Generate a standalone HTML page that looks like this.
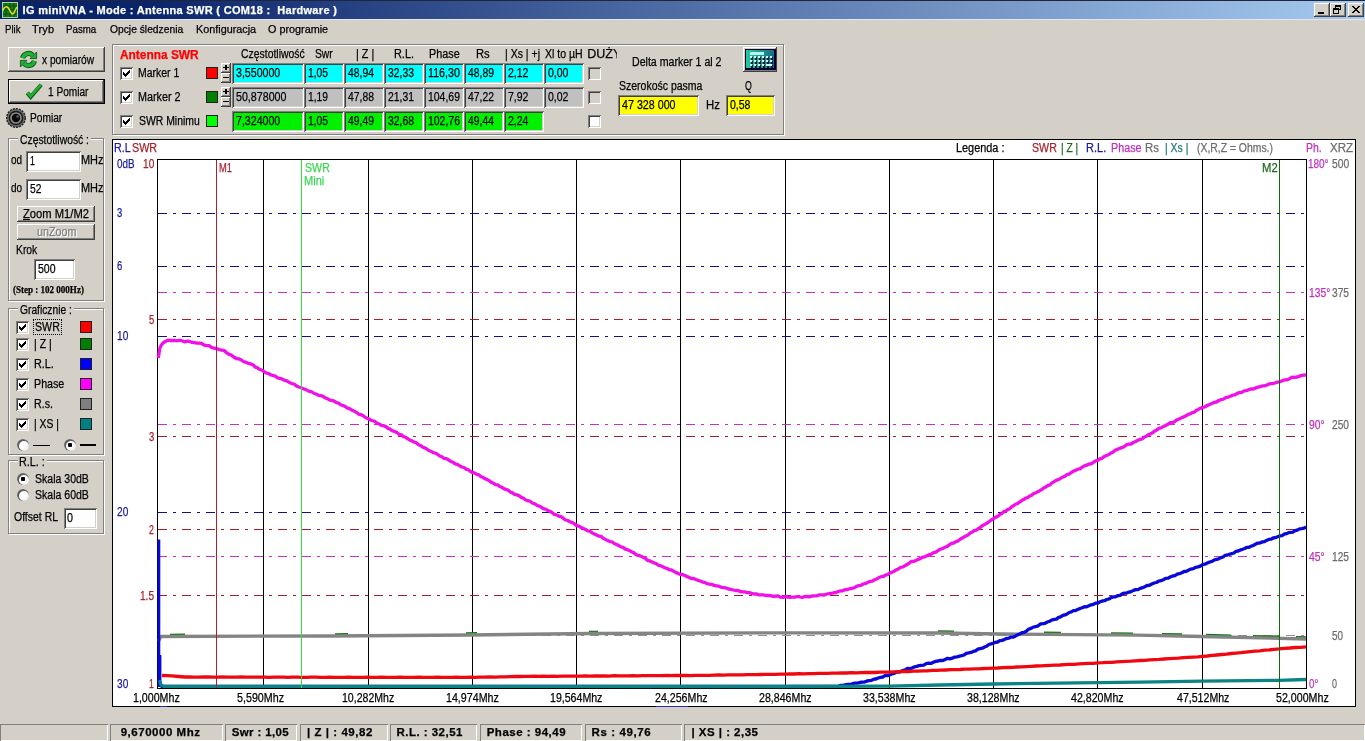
<!DOCTYPE html>
<html lang="pl"><head><meta charset="utf-8"><title>IG miniVNA - Mode : Antenna SWR</title>
<style>
html,body{margin:0;padding:0;}
html{background:#d4d0c8;}
#root{position:absolute;left:0;top:0;width:1365px;height:741px;will-change:transform;}
body{width:1365px;height:741px;overflow:hidden;position:relative;
 font-family:"Liberation Sans",sans-serif;font-size:12px;color:#000;}
.abs{position:absolute;box-sizing:border-box;}
.t{position:absolute;white-space:pre;display:block;transform-origin:0 50%;-webkit-text-stroke:0.25px currentColor;}
.sunk{box-shadow:inset 1px 1px #808080,inset -1px -1px #fff,inset 2px 2px #404040,inset -2px -2px #d4d0c8;}
.sunk1{box-shadow:inset 1px 1px #808080,inset -1px -1px #fff;}
.raise{box-shadow:inset -1px -1px #404040,inset 1px 1px #fff,inset -2px -2px #808080,inset 2px 2px #d4d0c8;background:#d4d0c8;}
.ck{position:absolute;left:3px;top:3px;}
.radio{width:12px;height:12px;border-radius:50%;background:#fff;
 box-shadow:inset 1px 1px 0 1px #606060, inset -1px -1px 0 1px #f4f4f4;border:0;}
.radio .dot{position:absolute;left:4px;top:4px;width:4px;height:4px;background:#000;border-radius:1px;}
.grp{border:1px solid #808080;box-shadow:1px 1px #fff, inset 1px 1px #fff;}
#title{position:absolute;left:0;top:0;width:1365px;height:19px;
 background:linear-gradient(to right,#0a246a 0%,#0a246a 10%,#a6caf0 100%);border-top:1px solid #20253a;box-sizing:border-box;}
.tb{position:absolute;top:2px;width:16px;height:14px;box-sizing:border-box;}
#title:after{content:'';position:absolute;left:0;top:18px;width:1365px;height:1px;background:#e6e4ea;}

</style></head><body>
<div id="root">
<div id="title"><svg class="abs" style="left:2px;top:1px" width="16" height="16" viewBox="0 0 16 16"><rect width="16" height="16" fill="#1e7a1e"/><rect x="0.5" y="0.5" width="15" height="15" fill="none" stroke="#9fd89f" stroke-width="1"/><path d="M4 1v14M8 1v14M12 1v14M1 4h14M1 8h14M1 12h14" stroke="#0d4f0d" stroke-width="1"/><path d="M1 8.5 C2.5 4,5.5 3.5,7.5 8 S11 13.5,12.5 9.5 L15 5" fill="none" stroke="#e8e028" stroke-width="1.5"/></svg><span class="t" style="left:22.60px;top:3.69px;font-size:11px;line-height:11px;color:#fff;font-weight:bold;letter-spacing:0.312px;">IG miniVNA - Mode : Antenna SWR ( COM18 :&nbsp; Hardware )</span><div class="tb raise" style="left:1314px"><svg width="16" height="14" viewBox="0 0 16 14" shape-rendering="crispEdges"><rect x="4" y="9" width="6" height="2" fill="#000"/></svg></div><div class="tb raise" style="left:1330px"><svg width="16" height="14" viewBox="0 0 16 14" shape-rendering="crispEdges"><path d="M5 2h6v2h-6zM5 2h1v3h-1zM10 2h1v5h-1zM9 6h2v1h-2z" fill="#000"/><path d="M3 5h6v2h-6zM3 5h1v6h-1zM8 5h1v6h-1zM3 10h6v1h-6z" fill="#000"/></svg></div><div class="tb raise" style="left:1348px"><svg width="16" height="14" viewBox="0 0 16 14" shape-rendering="crispEdges"><path d="M4 3h2v1h-2zM5 4h2v1h-2zM6 5h2v1h-2zM7 6h2v1h-2zM6 7h2v1h-2zM5 8h2v1h-2zM4 9h2v1h-2zM10 3h2v1h-2zM9 4h2v1h-2zM8 5h2v1h-2zM8 7h2v1h-2zM9 8h2v1h-2zM10 9h2v1h-2z" fill="#000"/></svg></div></div><span class="t" style="left:5.00px;top:24.19px;font-size:11px;line-height:11px;color:#000;transform:scaleX(0.8779);">Plik</span><span class="t" style="left:32.00px;top:24.19px;font-size:11px;line-height:11px;color:#000;letter-spacing:0.175px;">Tryb</span><span class="t" style="left:66.00px;top:24.19px;font-size:11px;line-height:11px;color:#000;transform:scaleX(0.8827);">Pasma</span><span class="t" style="left:110.00px;top:24.19px;font-size:11px;line-height:11px;color:#000;transform:scaleX(0.9349);">Opcje śledzenia</span><span class="t" style="left:196.00px;top:24.19px;font-size:11px;line-height:11px;color:#000;transform:scaleX(0.9834);">Konfiguracja</span><span class="t" style="left:268.00px;top:24.19px;font-size:11px;line-height:11px;color:#000;transform:scaleX(0.9833);">O programie</span><div class="abs raise" style="left:8px;top:47px;width:97px;height:25px;"><svg class="abs" style="left:11px;top:3px" width="19" height="19" viewBox="0 0 19 19"><g fill="none" stroke="#0c5a1c" stroke-width="5.2" stroke-linecap="butt"><path d="M3.6 8.2 A6 6 0 0 1 13.6 5.2"/><path d="M15.4 10.8 A6 6 0 0 1 5.4 13.8"/></g><g fill="none" stroke="#22b030" stroke-width="3.4"><path d="M3.6 8.2 A6 6 0 0 1 13.6 5.2"/><path d="M15.4 10.8 A6 6 0 0 1 5.4 13.8"/></g><path d="M11 8.6 L17.6 8.6 L17.6 2 Z" fill="#22b030" stroke="#0c5a1c" stroke-width="0.9"/><path d="M8 10.4 L1.4 10.4 L1.4 17 Z" fill="#22b030" stroke="#0c5a1c" stroke-width="0.9"/></svg></div><span class="t" style="left:41.60px;top:54.32px;font-size:12.5px;line-height:12.5px;color:#000;transform:scaleX(0.8153);">x pomiarów</span><div class="abs" style="left:8px;top:79px;width:97px;height:25px;background:#000;"></div><div class="abs raise" style="left:9px;top:80px;width:95px;height:23px;"><svg class="abs" style="left:16px;top:2px" width="20" height="20" viewBox="0 0 20 20"><path d="M2.3 10.9 L5.7 14.9 L16.2 2.7" fill="none" stroke="#0c5a1c" stroke-width="4" stroke-linejoin="miter"/><path d="M2.3 10.6 L5.6 14.3 L16 2.5" fill="none" stroke="#22b030" stroke-width="2.5" stroke-linejoin="miter"/></svg></div><span class="t" style="left:47.70px;top:85.82px;font-size:12.5px;line-height:12.5px;color:#000;transform:scaleX(0.8083);">1 Pomiar</span><svg class="abs" style="left:5px;top:107px" width="22" height="22" viewBox="0 0 22 22"><circle cx="11" cy="11" r="9.3" fill="#6a6a6a" stroke="#222" stroke-width="1.4" stroke-dasharray="2.1 1"/><circle cx="11" cy="11" r="6.6" fill="#8a8a8a" stroke="#1a1a1a" stroke-width="1.5"/><circle cx="11" cy="11" r="4.2" fill="#0a0a0a"/><circle cx="12.6" cy="9.6" r="1.3" fill="#5a5a5a"/></svg><span class="t" style="left:29.89px;top:111.82px;font-size:12.5px;line-height:12.5px;color:#000;transform:scaleX(0.8144);">Pomiar</span><div class="abs grp" style="left:8px;top:138px;width:96px;height:163px;"></div><div class="abs" style="left:17.8px;top:137px;width:73.60000000000001px;height:4px;background:#d4d0c8;"></div><span class="t" style="left:19.80px;top:133.82px;font-size:12.5px;line-height:12.5px;color:#000;transform:scaleX(0.8277);">Częstotliwość :</span><span class="t" style="left:10.90px;top:154.32px;font-size:12.5px;line-height:12.5px;color:#000;transform:scaleX(0.7956);">od</span><div class="abs sunk" style="left:26px;top:151px;width:55px;height:21px;background:#fff;"></div><span class="t" style="left:30.00px;top:155.32px;font-size:12.5px;line-height:12.5px;color:#000;transform:scaleX(0.7000);">1</span><span class="t" style="left:80.72px;top:154.32px;font-size:12.5px;line-height:12.5px;color:#000;transform:scaleX(0.8756);">MHz</span><span class="t" style="left:10.90px;top:182.32px;font-size:12.5px;line-height:12.5px;color:#000;transform:scaleX(0.7956);">do</span><div class="abs sunk" style="left:26px;top:179px;width:55px;height:21px;background:#fff;"></div><span class="t" style="left:30.00px;top:183.32px;font-size:12.5px;line-height:12.5px;color:#000;transform:scaleX(0.8243);">52</span><span class="t" style="left:80.72px;top:182.32px;font-size:12.5px;line-height:12.5px;color:#000;transform:scaleX(0.8756);">MHz</span><div class="abs raise" style="left:17px;top:206px;width:78px;height:16px;"></div><span class="t" style="left:22.50px;top:208.32px;font-size:12.5px;line-height:12.5px;color:#000;transform:scaleX(0.8958);"><u>Z</u>oom M1/M2</span><div class="abs raise" style="left:17px;top:224px;width:78px;height:16px;"></div><span class="t" style="left:37.50px;top:227.32px;font-size:12.5px;line-height:12.5px;color:#fff;transform:scaleX(0.8582);">unZoom</span><span class="t" style="left:36.50px;top:226.32px;font-size:12.5px;line-height:12.5px;color:#808080;transform:scaleX(0.8582);">unZoom</span><span class="t" style="left:15.87px;top:244.32px;font-size:12.5px;line-height:12.5px;color:#000;transform:scaleX(0.8251);">Krok</span><div class="abs sunk" style="left:34px;top:259px;width:41px;height:21px;background:#fff;"></div><span class="t" style="left:37.70px;top:263.32px;font-size:12.5px;line-height:12.5px;color:#000;transform:scaleX(0.8420);">500</span><span class="t" style="left:12.60px;top:285.44px;font-size:10px;line-height:10px;color:#000;font-weight:bold;font-family:'Liberation Serif',serif;transform:scaleX(0.9020);">(Step : 102 000Hz)</span><div class="abs grp" style="left:8px;top:308px;width:96px;height:147px;"></div><div class="abs" style="left:17.8px;top:307px;width:56.400000000000006px;height:4px;background:#d4d0c8;"></div><span class="t" style="left:19.80px;top:303.82px;font-size:12.5px;line-height:12.5px;color:#000;transform:scaleX(0.8192);">Graficznie :</span><div class="abs sunk" style="left:16px;top:321px;width:13px;height:13px;background:#fff;"><svg class="ck" width="7" height="7" viewBox="0 0 7 7" shape-rendering="crispEdges"><path d="M0 2h1v3h-1zM1 3h1v3h-1zM2 4h1v3h-1zM3 3h1v3h-1zM4 2h1v3h-1zM5 1h1v3h-1zM6 0h1v3h-1z" fill="#000"/></svg></div><span class="t" style="left:34.70px;top:321.32px;font-size:12.5px;line-height:12.5px;color:#000;transform:scaleX(0.8512);">SWR</span><div class="abs" style="left:80px;top:321px;width:12px;height:12px;background:#ff0000;box-shadow:inset 0 0 0 1px #202020;"></div><div class="abs sunk" style="left:16px;top:338px;width:13px;height:13px;background:#fff;"><svg class="ck" width="7" height="7" viewBox="0 0 7 7" shape-rendering="crispEdges"><path d="M0 2h1v3h-1zM1 3h1v3h-1zM2 4h1v3h-1zM3 3h1v3h-1zM4 2h1v3h-1zM5 1h1v3h-1zM6 0h1v3h-1z" fill="#000"/></svg></div><span class="t" style="left:33.86px;top:338.32px;font-size:12.5px;line-height:12.5px;color:#000;transform:scaleX(0.8372);">| Z |</span><div class="abs" style="left:80px;top:338px;width:12px;height:12px;background:#008000;box-shadow:inset 0 0 0 1px #202020;"></div><div class="abs sunk" style="left:16px;top:358px;width:13px;height:13px;background:#fff;"><svg class="ck" width="7" height="7" viewBox="0 0 7 7" shape-rendering="crispEdges"><path d="M0 2h1v3h-1zM1 3h1v3h-1zM2 4h1v3h-1zM3 3h1v3h-1zM4 2h1v3h-1zM5 1h1v3h-1zM6 0h1v3h-1z" fill="#000"/></svg></div><span class="t" style="left:33.83px;top:358.32px;font-size:12.5px;line-height:12.5px;color:#000;transform:scaleX(0.8671);">R.L.</span><div class="abs" style="left:80px;top:358px;width:12px;height:12px;background:#0000ff;box-shadow:inset 0 0 0 1px #202020;"></div><div class="abs sunk" style="left:16px;top:378px;width:13px;height:13px;background:#fff;"><svg class="ck" width="7" height="7" viewBox="0 0 7 7" shape-rendering="crispEdges"><path d="M0 2h1v3h-1zM1 3h1v3h-1zM2 4h1v3h-1zM3 3h1v3h-1zM4 2h1v3h-1zM5 1h1v3h-1zM6 0h1v3h-1z" fill="#000"/></svg></div><span class="t" style="left:33.84px;top:378.32px;font-size:12.5px;line-height:12.5px;color:#000;transform:scaleX(0.8553);">Phase</span><div class="abs" style="left:80px;top:378px;width:12px;height:12px;background:#ff00ff;box-shadow:inset 0 0 0 1px #202020;"></div><div class="abs sunk" style="left:16px;top:398px;width:13px;height:13px;background:#fff;"><svg class="ck" width="7" height="7" viewBox="0 0 7 7" shape-rendering="crispEdges"><path d="M0 2h1v3h-1zM1 3h1v3h-1zM2 4h1v3h-1zM3 3h1v3h-1zM4 2h1v3h-1zM5 1h1v3h-1zM6 0h1v3h-1z" fill="#000"/></svg></div><span class="t" style="left:33.85px;top:398.32px;font-size:12.5px;line-height:12.5px;color:#000;transform:scaleX(0.8530);">R.s.</span><div class="abs" style="left:80px;top:398px;width:12px;height:12px;background:#808080;box-shadow:inset 0 0 0 1px #202020;"></div><div class="abs sunk" style="left:16px;top:418px;width:13px;height:13px;background:#fff;"><svg class="ck" width="7" height="7" viewBox="0 0 7 7" shape-rendering="crispEdges"><path d="M0 2h1v3h-1zM1 3h1v3h-1zM2 4h1v3h-1zM3 3h1v3h-1zM4 2h1v3h-1zM5 1h1v3h-1zM6 0h1v3h-1z" fill="#000"/></svg></div><span class="t" style="left:33.87px;top:418.32px;font-size:12.5px;line-height:12.5px;color:#000;transform:scaleX(0.8279);">| XS |</span><div class="abs" style="left:80px;top:418px;width:12px;height:12px;background:#008080;box-shadow:inset 0 0 0 1px #202020;"></div><div class="abs" style="left:33px;top:319px;width:29px;height:16px;border:1px dotted #000;"></div><div class="abs radio" style="left:17px;top:439px;"></div><div class="abs" style="left:33px;top:445px;width:17px;height:1px;background:#000;"></div><div class="abs radio" style="left:64px;top:439px;"><i class="dot"></i></div><div class="abs" style="left:80px;top:444px;width:16px;height:2px;background:#000;"></div><div class="abs grp" style="left:8px;top:460px;width:96px;height:74px;"></div><div class="abs" style="left:17.8px;top:459px;width:29.599999999999998px;height:4px;background:#d4d0c8;"></div><span class="t" style="left:18.93px;top:456.32px;font-size:12.5px;line-height:12.5px;color:#000;transform:scaleX(0.8663);">R.L. :</span><div class="abs radio" style="left:17px;top:473px;"><i class="dot"></i></div><span class="t" style="left:34.70px;top:473.32px;font-size:12.5px;line-height:12.5px;color:#000;transform:scaleX(0.8428);">Skala 30dB</span><div class="abs radio" style="left:17px;top:489px;"></div><span class="t" style="left:34.70px;top:489.32px;font-size:12.5px;line-height:12.5px;color:#000;transform:scaleX(0.8428);">Skala 60dB</span><span class="t" style="left:13.70px;top:511.32px;font-size:12.5px;line-height:12.5px;color:#000;transform:scaleX(0.8381);">Offset RL</span><div class="abs sunk" style="left:64px;top:508px;width:33px;height:21px;background:#fff;"></div><span class="t" style="left:67.00px;top:511.82px;font-size:12.5px;line-height:12.5px;color:#000;transform:scaleX(0.8571);">0</span><div class="abs grp" style="left:112px;top:44px;width:672px;height:91px;"></div><span class="t" style="left:120.00px;top:48.74px;font-size:12px;line-height:12px;color:#ff0000;font-weight:bold;transform:scaleX(0.9917);">Antenna SWR</span><span class="t" style="left:240.70px;top:48.32px;font-size:12.5px;line-height:12.5px;color:#000;transform:scaleX(0.8338);">Częstotliwość</span><span class="t" style="left:314.70px;top:48.32px;font-size:12.5px;line-height:12.5px;color:#000;transform:scaleX(0.8238);">Swr</span><span class="t" style="left:355.74px;top:48.32px;font-size:12.5px;line-height:12.5px;color:#000;transform:scaleX(0.8624);">| Z |</span><span class="t" style="left:393.93px;top:48.32px;font-size:12.5px;line-height:12.5px;color:#000;transform:scaleX(0.8717);">R.L.</span><span class="t" style="left:428.63px;top:48.32px;font-size:12.5px;line-height:12.5px;color:#000;transform:scaleX(0.8669);">Phase</span><span class="t" style="left:475.70px;top:48.32px;font-size:12.5px;line-height:12.5px;color:#000;transform:scaleX(0.8983);">Rs</span><span class="t" style="left:505.46px;top:48.32px;font-size:12.5px;line-height:12.5px;color:#000;transform:scaleX(0.8417);">| Xs | +j</span><span class="t" style="left:544.80px;top:48.32px;font-size:12.5px;line-height:12.5px;color:#000;transform:scaleX(0.8436);">Xl to µH</span><div class="abs" style="left:586px;top:46px;width:30.5px;height:16px;overflow:hidden;"><span class="t" style="left:1.30px;top:2.32px;font-size:12.5px;line-height:12.5px;color:#000;letter-spacing:0.003px;">DUŻY</span></div><div class="abs sunk" style="left:120px;top:67px;width:13px;height:13px;background:#fff;"><svg class="ck" width="7" height="7" viewBox="0 0 7 7" shape-rendering="crispEdges"><path d="M0 2h1v3h-1zM1 3h1v3h-1zM2 4h1v3h-1zM3 3h1v3h-1zM4 2h1v3h-1zM5 1h1v3h-1zM6 0h1v3h-1z" fill="#000"/></svg></div><span class="t" style="left:137.86px;top:67.32px;font-size:12.5px;line-height:12.5px;color:#000;transform:scaleX(0.8374);">Marker 1</span><div class="abs" style="left:206px;top:67px;width:12px;height:12px;background:#ff0000;box-shadow:inset 0 0 0 1px #202020;"></div><div class="abs" style="left:221px;top:63px;width:10px;height:20px;"><div class="abs raise" style="left:0;top:0;width:10px;height:10px;"></div><div class="abs raise" style="left:0;top:10px;width:10px;height:10px;"></div><svg class="abs" style="left:0;top:0" width="10" height="20" viewBox="0 0 10 20" shape-rendering="crispEdges"><path d="M2 4h6v1h-6zM4 2h2v5h-2zM2 14h6v1h-6z" fill="#000"/></svg></div><div class="abs sunk" style="left:232px;top:63px;width:72px;height:21px;background:#00ffff;"></div><span class="t" style="left:236.00px;top:67.32px;font-size:12.5px;line-height:12.5px;color:#000;transform:scaleX(0.8489);">3,550000</span><div class="abs sunk" style="left:304px;top:63px;width:40px;height:21px;background:#00ffff;"></div><span class="t" style="left:308.00px;top:67.32px;font-size:12.5px;line-height:12.5px;color:#000;transform:scaleX(0.8205);">1,05</span><div class="abs sunk" style="left:344px;top:63px;width:40px;height:21px;background:#00ffff;"></div><span class="t" style="left:348.00px;top:67.32px;font-size:12.5px;line-height:12.5px;color:#000;transform:scaleX(0.8299);">48,94</span><div class="abs sunk" style="left:384px;top:63px;width:40px;height:21px;background:#00ffff;"></div><span class="t" style="left:388.00px;top:67.32px;font-size:12.5px;line-height:12.5px;color:#000;transform:scaleX(0.8299);">32,33</span><div class="abs sunk" style="left:424px;top:63px;width:40px;height:21px;background:#00ffff;"></div><span class="t" style="left:428.00px;top:67.32px;font-size:12.5px;line-height:12.5px;color:#000;transform:scaleX(0.8567);">116,30</span><div class="abs sunk" style="left:464px;top:63px;width:40px;height:21px;background:#00ffff;"></div><span class="t" style="left:468.00px;top:67.32px;font-size:12.5px;line-height:12.5px;color:#000;transform:scaleX(0.8299);">48,89</span><div class="abs sunk" style="left:504px;top:63px;width:40px;height:21px;background:#00ffff;"></div><span class="t" style="left:508.00px;top:67.32px;font-size:12.5px;line-height:12.5px;color:#000;transform:scaleX(0.8410);">2,12</span><div class="abs sunk" style="left:544px;top:63px;width:40px;height:21px;background:#00ffff;"></div><span class="t" style="left:548.00px;top:67.32px;font-size:12.5px;line-height:12.5px;color:#000;transform:scaleX(0.8410);">0,00</span><div class="abs sunk" style="left:588px;top:67px;width:13px;height:13px;background:#d4d0c8;"></div><div class="abs sunk" style="left:120px;top:91px;width:13px;height:13px;background:#fff;"><svg class="ck" width="7" height="7" viewBox="0 0 7 7" shape-rendering="crispEdges"><path d="M0 2h1v3h-1zM1 3h1v3h-1zM2 4h1v3h-1zM3 3h1v3h-1zM4 2h1v3h-1zM5 1h1v3h-1zM6 0h1v3h-1z" fill="#000"/></svg></div><span class="t" style="left:137.84px;top:91.32px;font-size:12.5px;line-height:12.5px;color:#000;transform:scaleX(0.8643);">Marker 2</span><div class="abs" style="left:206px;top:91px;width:12px;height:12px;background:#008000;box-shadow:inset 0 0 0 1px #202020;"></div><div class="abs" style="left:221px;top:87px;width:10px;height:20px;"><div class="abs raise" style="left:0;top:0;width:10px;height:10px;"></div><div class="abs raise" style="left:0;top:10px;width:10px;height:10px;"></div><svg class="abs" style="left:0;top:0" width="10" height="20" viewBox="0 0 10 20" shape-rendering="crispEdges"><path d="M2 4h6v1h-6zM4 2h2v5h-2zM2 14h6v1h-6z" fill="#000"/></svg></div><div class="abs sunk" style="left:232px;top:87px;width:72px;height:21px;background:#c0c0c0;"></div><span class="t" style="left:236.00px;top:91.32px;font-size:12.5px;line-height:12.5px;color:#000;transform:scaleX(0.8540);">50,878000</span><div class="abs sunk" style="left:304px;top:87px;width:40px;height:21px;background:#c0c0c0;"></div><span class="t" style="left:308.00px;top:91.32px;font-size:12.5px;line-height:12.5px;color:#000;transform:scaleX(0.8205);">1,19</span><div class="abs sunk" style="left:344px;top:87px;width:40px;height:21px;background:#c0c0c0;"></div><span class="t" style="left:348.00px;top:91.32px;font-size:12.5px;line-height:12.5px;color:#000;transform:scaleX(0.8299);">47,88</span><div class="abs sunk" style="left:384px;top:87px;width:40px;height:21px;background:#c0c0c0;"></div><span class="t" style="left:388.00px;top:91.32px;font-size:12.5px;line-height:12.5px;color:#000;transform:scaleX(0.8299);">21,31</span><div class="abs sunk" style="left:424px;top:87px;width:40px;height:21px;background:#c0c0c0;"></div><span class="t" style="left:428.00px;top:91.32px;font-size:12.5px;line-height:12.5px;color:#000;transform:scaleX(0.8359);">104,69</span><div class="abs sunk" style="left:464px;top:87px;width:40px;height:21px;background:#c0c0c0;"></div><span class="t" style="left:468.00px;top:91.32px;font-size:12.5px;line-height:12.5px;color:#000;transform:scaleX(0.8299);">47,22</span><div class="abs sunk" style="left:504px;top:87px;width:40px;height:21px;background:#c0c0c0;"></div><span class="t" style="left:508.00px;top:91.32px;font-size:12.5px;line-height:12.5px;color:#000;transform:scaleX(0.8410);">7,92</span><div class="abs sunk" style="left:544px;top:87px;width:40px;height:21px;background:#c0c0c0;"></div><span class="t" style="left:548.00px;top:91.32px;font-size:12.5px;line-height:12.5px;color:#000;transform:scaleX(0.8410);">0,02</span><div class="abs sunk" style="left:588px;top:91px;width:13px;height:13px;background:#d4d0c8;"></div><div class="abs sunk" style="left:120px;top:115px;width:13px;height:13px;background:#fff;"><svg class="ck" width="7" height="7" viewBox="0 0 7 7" shape-rendering="crispEdges"><path d="M0 2h1v3h-1zM1 3h1v3h-1zM2 4h1v3h-1zM3 3h1v3h-1zM4 2h1v3h-1zM5 1h1v3h-1zM6 0h1v3h-1z" fill="#000"/></svg></div><span class="t" style="left:138.70px;top:115.32px;font-size:12.5px;line-height:12.5px;color:#000;transform:scaleX(0.8333);">SWR Minimu</span><div class="abs" style="left:206px;top:115px;width:12px;height:12px;background:#00ff00;box-shadow:inset 0 0 0 1px #202020;"></div><div class="abs sunk" style="left:232px;top:111px;width:72px;height:21px;background:#00f000;"></div><span class="t" style="left:236.00px;top:115.32px;font-size:12.5px;line-height:12.5px;color:#000;transform:scaleX(0.8489);">7,324000</span><div class="abs sunk" style="left:304px;top:111px;width:40px;height:21px;background:#00f000;"></div><span class="t" style="left:308.00px;top:115.32px;font-size:12.5px;line-height:12.5px;color:#000;transform:scaleX(0.8205);">1,05</span><div class="abs sunk" style="left:344px;top:111px;width:40px;height:21px;background:#00f000;"></div><span class="t" style="left:348.00px;top:115.32px;font-size:12.5px;line-height:12.5px;color:#000;transform:scaleX(0.8299);">49,49</span><div class="abs sunk" style="left:384px;top:111px;width:40px;height:21px;background:#00f000;"></div><span class="t" style="left:388.00px;top:115.32px;font-size:12.5px;line-height:12.5px;color:#000;transform:scaleX(0.8299);">32,68</span><div class="abs sunk" style="left:424px;top:111px;width:40px;height:21px;background:#00f000;"></div><span class="t" style="left:428.00px;top:115.32px;font-size:12.5px;line-height:12.5px;color:#000;transform:scaleX(0.8359);">102,76</span><div class="abs sunk" style="left:464px;top:111px;width:40px;height:21px;background:#00f000;"></div><span class="t" style="left:468.00px;top:115.32px;font-size:12.5px;line-height:12.5px;color:#000;transform:scaleX(0.8299);">49,44</span><div class="abs sunk" style="left:504px;top:111px;width:40px;height:21px;background:#00f000;"></div><span class="t" style="left:508.00px;top:115.32px;font-size:12.5px;line-height:12.5px;color:#000;transform:scaleX(0.8410);">2,24</span><div class="abs sunk" style="left:588px;top:115px;width:13px;height:13px;background:#fff;"></div><span class="t" style="left:631.85px;top:56.32px;font-size:12.5px;line-height:12.5px;color:#000;transform:scaleX(0.8476);">Delta marker 1 al 2</span><div class="abs raise" style="left:743px;top:47px;width:34px;height:25px;"><svg class="abs" style="left:2px;top:2px" width="31" height="21" viewBox="0 0 31 21" shape-rendering="crispEdges"><defs><linearGradient id="cg" x1="0" x2="1" y1="0" y2="0"><stop offset="0" stop-color="#24c8a0"/><stop offset="0.5" stop-color="#1c9c90"/><stop offset="1" stop-color="#186c88"/></linearGradient></defs><rect width="31" height="21" fill="#00002c"/><rect x="1" y="1" width="28" height="18" fill="url(#cg)"/><rect x="5" y="3" width="14" height="3" fill="#b4f4f0"/><g fill="#001838"><rect x="6" y="8" width="2" height="3"/><rect x="6" y="12" width="2" height="3"/><rect x="6" y="16" width="2" height="3"/><rect x="10" y="8" width="2" height="3"/><rect x="10" y="12" width="2" height="3"/><rect x="10" y="16" width="2" height="3"/><rect x="14" y="8" width="2" height="3"/><rect x="14" y="12" width="2" height="3"/><rect x="14" y="16" width="2" height="3"/><rect x="18" y="8" width="2" height="3"/><rect x="18" y="12" width="2" height="3"/><rect x="18" y="16" width="2" height="3"/><rect x="22" y="8" width="2" height="3"/><rect x="22" y="12" width="2" height="3"/><rect x="22" y="16" width="2" height="3"/><rect x="26" y="8" width="2" height="3"/><rect x="26" y="12" width="2" height="3"/><rect x="26" y="16" width="2" height="3"/></g><g fill="#d0f8f8"><rect x="5" y="7" width="2" height="2"/><rect x="5" y="11" width="2" height="2"/><rect x="5" y="15" width="2" height="2"/><rect x="9" y="7" width="2" height="2"/><rect x="9" y="11" width="2" height="2"/><rect x="9" y="15" width="2" height="2"/><rect x="13" y="7" width="2" height="2"/><rect x="13" y="11" width="2" height="2"/><rect x="13" y="15" width="2" height="2"/><rect x="17" y="7" width="2" height="2"/><rect x="17" y="11" width="2" height="2"/><rect x="17" y="15" width="2" height="2"/><rect x="21" y="7" width="2" height="2"/><rect x="21" y="11" width="2" height="2"/><rect x="25" y="7" width="2" height="2"/><rect x="25" y="11" width="2" height="2"/><rect x="21" y="15" width="6" height="2"/></g></svg></div><span class="t" style="left:618.80px;top:80.32px;font-size:12.5px;line-height:12.5px;color:#000;transform:scaleX(0.8391);">Szerokośc pasma</span><span class="t" style="left:744.90px;top:80.32px;font-size:12.5px;line-height:12.5px;color:#000;transform:scaleX(0.7000);">Q</span><div class="abs sunk" style="left:618px;top:95px;width:81px;height:21px;background:#ffff00;"></div><span class="t" style="left:621.80px;top:99.32px;font-size:12.5px;line-height:12.5px;color:#000;transform:scaleX(0.8561);">47 328 000</span><span class="t" style="left:705.79px;top:99.32px;font-size:12.5px;line-height:12.5px;color:#000;transform:scaleX(0.9054);">Hz</span><div class="abs sunk" style="left:726px;top:95px;width:49px;height:21px;background:#ffff00;"></div><span class="t" style="left:729.80px;top:99.32px;font-size:12.5px;line-height:12.5px;color:#000;transform:scaleX(0.8410);">0,58</span><svg class="abs" style="left:0;top:0" width="1365" height="741" viewBox="0 0 1365 741"><g shape-rendering="crispEdges"><rect x="112" y="139" width="1244" height="568" fill="#000"/><rect x="113" y="140" width="1242" height="566" fill="#fff"/><rect x="157.5" y="159.5" width="1149" height="529" fill="none" stroke="#000" stroke-width="1"/><path d="M263.5 160V688M368.5 160V688M472.5 160V688M576.5 160V688M680.5 160V688M785.5 160V688M889.5 160V688M993.5 160V688M1097.5 160V688M1202.5 160V688" stroke="#000" stroke-width="1" fill="none"/><path d="M158 213.5H1306M158 266.5H1306M158 336.5H1306M158 512.5H1306" stroke="#10108c" stroke-width="1" fill="none" stroke-dasharray="9 6 3 6"/><path d="M158 292.5H1306M158 424.5H1306M158 556.5H1306" stroke="#c830c6" stroke-width="1" fill="none" stroke-dasharray="9 6 3 6"/><path d="M158 319.5H1306M158 436.5H1306M158 529.5H1306M158 595.5H1306" stroke="#a42026" stroke-width="1" fill="none" stroke-dasharray="9 6 3 6"/><path d="M158 635.5H1306" stroke="#909090" stroke-width="1" fill="none" stroke-dasharray="9 6 3 6"/></g><path d="M170.0 635.2 L185.0 635.1" fill="none" stroke="#0a7a0a" stroke-width="3" stroke-linejoin="round" /><path d="M335.0 634.7 L348.0 634.6" fill="none" stroke="#0a7a0a" stroke-width="3" stroke-linejoin="round" /><path d="M466.0 633.7 L477.0 633.6" fill="none" stroke="#0a7a0a" stroke-width="3" stroke-linejoin="round" /><path d="M589.0 632.2 L598.0 632.2" fill="none" stroke="#0a7a0a" stroke-width="3" stroke-linejoin="round" /><path d="M938.0 631.7 L954.0 631.9" fill="none" stroke="#0a7a0a" stroke-width="3" stroke-linejoin="round" /><path d="M1044.0 633.1 L1061.0 633.2" fill="none" stroke="#0a7a0a" stroke-width="3" stroke-linejoin="round" /><path d="M1111.0 633.7 L1133.0 633.9" fill="none" stroke="#0a7a0a" stroke-width="3" stroke-linejoin="round" /><path d="M1162.0 634.4 L1182.0 634.8" fill="none" stroke="#0a7a0a" stroke-width="3" stroke-linejoin="round" /><path d="M1206.0 635.3 L1231.0 635.9" fill="none" stroke="#0a7a0a" stroke-width="3" stroke-linejoin="round" /><path d="M1253.0 636.4 L1279.0 637.1" fill="none" stroke="#0a7a0a" stroke-width="3" stroke-linejoin="round" /><path d="M1296.0 637.5 L1306.0 637.7" fill="none" stroke="#0a7a0a" stroke-width="3" stroke-linejoin="round" /><path d="M158.5 641.0 L161.0 636.5 L330.0 636.0 L470.0 635.0 L590.0 633.5 L780.0 632.8 L940.0 633.0 L1000.0 634.0 L1137.0 635.2 L1202.0 636.5 L1306.0 639.0" fill="none" stroke="#848484" stroke-width="3.3" stroke-linejoin="round" /><path d="M158.9 539.5 L158.9 687.0" fill="none" stroke="#0808d8" stroke-width="2.8" stroke-linejoin="round" /><path d="M160.4 655.0 L160.4 687.0" fill="none" stroke="#0808d8" stroke-width="2" stroke-linejoin="round" /><path d="M160.5 686.4 L835.0 686.4 L835.0 686.4 L838.0 686.5 L840.4 685.5 L842.8 685.4 L845.2 684.9 L847.7 684.4 L850.1 684.5 L852.5 683.7 L854.9 683.1 L857.3 683.2 L859.8 682.5 L862.2 682.2 L864.6 682.1 L867.0 681.0 L869.2 680.7 L871.5 680.4 L873.8 679.2 L876.0 679.0 L878.2 678.0 L880.5 677.4 L882.8 677.0 L885.0 675.7 L887.2 675.7 L889.5 675.0 L891.7 674.0 L894.0 673.5 L896.2 672.1 L898.5 672.2 L900.7 671.6 L902.9 670.5 L905.2 669.9 L907.4 668.5 L909.7 668.6 L911.9 668.1 L914.3 666.9 L916.7 666.4 L919.0 665.7 L921.4 665.4 L923.8 665.1 L926.2 663.6 L928.6 663.1 L930.9 663.4 L933.3 662.2 L935.7 661.4 L938.1 661.0 L940.4 660.4 L942.8 660.5 L945.2 659.4 L947.5 658.3 L949.9 658.8 L952.3 658.2 L954.7 657.1 L957.0 656.8 L959.4 656.1 L961.7 655.7 L964.0 655.0 L966.3 653.3 L968.6 652.9 L971.0 652.4 L973.3 651.4 L975.6 650.8 L977.9 649.2 L980.1 648.6 L982.3 648.2 L984.5 647.0 L986.6 646.3 L988.8 644.5 L991.0 643.9 L993.2 643.2 L995.4 642.3 L997.6 642.0 L999.8 640.6 L1002.0 640.4 L1004.2 639.6 L1006.5 638.5 L1008.7 638.2 L1010.9 637.1 L1013.1 637.1 L1015.3 636.2 L1017.5 634.9 L1019.8 634.0 L1022.0 632.6 L1024.3 632.3 L1026.5 631.1 L1028.8 629.1 L1031.0 628.4 L1033.3 627.1 L1035.6 626.7 L1038.0 625.9 L1040.3 624.0 L1042.7 623.7 L1045.0 623.3 L1047.4 622.0 L1049.7 621.2 L1052.1 619.9 L1054.4 619.4 L1056.5 619.1 L1058.6 617.4 L1060.7 616.8 L1062.8 615.4 L1065.0 614.9 L1067.1 613.9 L1069.2 612.5 L1071.3 611.9 L1073.4 610.6 L1075.5 610.6 L1077.7 609.5 L1080.0 608.5 L1082.2 607.8 L1084.5 606.7 L1086.7 606.8 L1088.9 605.8 L1091.2 604.8 L1093.4 604.3 L1095.7 603.1 L1097.9 603.0 L1100.1 601.8 L1102.3 601.0 L1104.5 600.7 L1106.7 599.5 L1108.9 599.0 L1111.1 597.6 L1113.3 596.9 L1115.5 596.8 L1117.7 595.7 L1120.0 595.3 L1122.2 593.8 L1124.5 593.1 L1126.7 593.1 L1129.0 592.1 L1131.2 591.6 L1133.5 590.4 L1135.7 589.6 L1138.0 589.6 L1140.2 588.4 L1142.5 587.7 L1144.8 586.7 L1147.1 585.5 L1149.4 585.3 L1151.8 584.0 L1154.1 583.0 L1156.4 582.5 L1158.7 581.1 L1161.0 580.7 L1163.3 579.7 L1165.6 578.4 L1167.9 578.2 L1170.2 577.0 L1172.6 576.0 L1174.9 575.6 L1177.2 574.2 L1179.5 573.7 L1181.8 572.8 L1184.1 571.5 L1186.4 571.3 L1188.7 570.1 L1191.0 569.1 L1193.4 568.6 L1195.7 567.3 L1198.0 566.9 L1200.3 566.1 L1202.6 564.6 L1205.0 564.2 L1207.3 563.1 L1209.7 562.0 L1212.0 561.3 L1214.4 559.8 L1216.6 559.3 L1218.7 558.8 L1220.9 557.6 L1223.1 557.0 L1225.2 555.3 L1227.4 555.0 L1229.5 554.3 L1231.7 553.6 L1233.9 553.0 L1236.0 551.3 L1238.2 551.0 L1240.4 549.9 L1242.5 549.3 L1244.7 548.5 L1246.9 547.3 L1249.0 547.3 L1251.2 546.1 L1253.3 545.5 L1255.5 544.2 L1257.7 543.1 L1259.8 543.0 L1262.0 542.0 L1264.2 541.7 L1266.5 540.4 L1268.7 539.4 L1270.9 539.2 L1273.1 538.0 L1275.3 537.7 L1277.6 536.7 L1279.8 535.9 L1282.0 535.7 L1284.2 534.2 L1286.3 533.7 L1288.5 532.7 L1290.7 532.4 L1292.9 532.2 L1295.1 530.7 L1297.3 530.1 L1299.5 528.8 L1301.6 528.6 L1303.8 528.2 L1306.0 527.1" fill="none" stroke="#0808d8" stroke-width="3.3" stroke-linejoin="round" /><path d="M162.0 675.5 L167.0 675.7 L172.0 675.9 L178.5 676.5 L185.0 677.0 L189.7 676.9 L194.4 677.1 L199.0 677.1 L203.7 677.0 L208.4 677.0 L213.1 677.1 L217.7 677.1 L222.4 677.0 L227.1 677.1 L231.8 677.2 L236.5 677.1 L241.1 677.0 L245.8 677.1 L250.5 677.2 L255.2 677.1 L259.8 677.1 L264.5 677.2 L269.2 677.3 L273.9 677.1 L278.5 677.1 L283.2 677.2 L287.9 677.3 L292.6 677.2 L297.3 677.2 L301.9 677.3 L306.6 677.3 L311.3 677.2 L316.0 677.2 L320.6 677.4 L325.3 677.3 L330.0 677.2 L334.7 677.3 L339.3 677.4 L344.0 677.3 L348.7 677.2 L353.3 677.3 L358.0 677.4 L362.7 677.3 L367.3 677.2 L372.0 677.4 L376.7 677.3 L381.3 677.2 L386.0 677.3 L390.7 677.4 L395.3 677.3 L400.0 677.2 L404.7 677.3 L409.3 677.4 L414.0 677.3 L418.7 677.2 L423.3 677.3 L428.0 677.4 L432.7 677.3 L437.3 677.2 L442.0 677.3 L446.7 677.4 L451.3 677.3 L456.0 677.2 L460.7 677.3 L465.3 677.4 L470.0 677.2 L475.0 677.3 L480.0 677.2 L485.0 677.1 L490.0 677.0 L495.0 677.2 L500.0 676.9 L505.0 676.9 L510.0 676.7 L515.0 676.5 L520.0 676.5 L524.7 676.4 L529.3 676.3 L534.0 676.2 L538.7 676.4 L543.3 676.2 L548.0 676.3 L552.7 676.1 L557.3 676.3 L562.0 676.1 L566.7 676.1 L571.3 676.1 L576.0 676.1 L580.7 676.1 L585.3 675.9 L590.0 676.1 L594.8 675.9 L599.6 676.0 L604.3 675.8 L609.1 676.1 L613.9 675.7 L618.7 675.9 L623.5 675.8 L628.3 675.9 L633.0 675.6 L637.8 675.8 L642.6 675.7 L647.4 675.6 L652.2 675.6 L657.0 675.7 L661.7 675.6 L666.5 675.5 L671.3 675.6 L676.1 675.5 L680.9 675.5 L685.7 675.4 L690.4 675.6 L695.2 675.4 L700.0 675.4 L704.7 675.4 L709.4 675.3 L714.1 675.2 L718.8 675.0 L723.5 675.2 L728.2 674.9 L732.9 674.9 L737.6 674.8 L742.4 674.9 L747.1 674.6 L751.8 674.6 L756.5 674.6 L761.2 674.5 L765.9 674.3 L770.6 674.3 L775.3 674.4 L780.0 674.1 L784.8 674.1 L789.5 674.0 L794.3 674.0 L799.0 673.7 L803.8 673.8 L808.6 673.7 L813.3 673.6 L818.1 673.4 L822.8 673.4 L827.6 673.4 L832.4 673.1 L837.1 673.1 L841.9 673.0 L846.7 673.0 L851.4 672.7 L856.2 672.8 L860.9 672.6 L865.7 672.5 L870.5 672.4 L875.2 672.5 L880.0 672.2 L884.7 672.1 L889.5 672.2 L894.2 671.9 L898.9 671.7 L903.6 671.5 L908.3 671.5 L913.0 671.1 L917.7 671.1 L922.4 670.8 L927.1 670.8 L931.8 670.4 L936.5 670.3 L941.2 670.2 L946.0 670.0 L950.7 669.7 L955.4 669.6 L960.1 669.5 L964.8 669.2 L969.5 669.1 L974.2 668.9 L978.9 668.8 L983.6 668.5 L988.3 668.4 L993.0 668.2 L997.8 668.0 L1002.5 667.6 L1007.3 667.5 L1012.1 667.3 L1016.9 667.0 L1021.6 666.8 L1026.4 666.6 L1031.2 666.3 L1036.0 666.0 L1040.7 665.9 L1045.5 665.6 L1050.3 665.3 L1055.0 665.1 L1059.8 665.0 L1064.6 664.7 L1069.4 664.3 L1074.1 664.3 L1078.9 663.9 L1083.7 663.7 L1088.5 663.4 L1093.2 663.4 L1098.0 662.9 L1102.7 662.7 L1107.3 662.4 L1112.0 662.3 L1116.7 661.8 L1121.3 661.6 L1126.0 661.4 L1130.7 661.2 L1135.3 660.8 L1140.0 660.5 L1144.8 660.4 L1149.6 659.9 L1154.4 659.6 L1159.3 659.4 L1164.1 659.0 L1168.9 658.6 L1173.7 658.3 L1178.5 658.1 L1183.3 657.6 L1188.2 657.4 L1193.0 657.1 L1197.8 656.8 L1202.6 656.3 L1207.4 656.0 L1212.1 655.4 L1216.9 655.0 L1221.7 654.5 L1226.5 654.1 L1231.2 653.5 L1236.0 653.1 L1240.8 652.7 L1245.6 652.1 L1250.3 651.6 L1255.1 651.2 L1259.9 650.8 L1264.7 650.1 L1269.5 649.8 L1274.2 649.3 L1279.0 648.9 L1284.4 648.3 L1289.8 648.0 L1295.2 647.5 L1300.6 647.3 L1306.0 646.8" fill="none" stroke="#f00810" stroke-width="3.3" stroke-linejoin="round" /><path d="M159.5 680.0 L161.0 685.0 L164.0 686.4 L500.0 686.3 L780.0 686.5 L889.0 686.1 L940.0 685.0 L993.0 684.0 L1098.0 682.7 L1140.0 682.2 L1202.0 681.1 L1279.0 680.3 L1306.0 679.5" fill="none" stroke="#0c8484" stroke-width="3.3" stroke-linejoin="round" /><path d="M158.3 358.0 L158.7 355.5 L159.1 352.8 L159.5 350.3 L159.9 347.9 L161.4 345.0 L162.9 343.1 L165.4 341.5 L167.9 340.2 L170.4 340.5 L172.9 340.3 L175.3 340.5 L177.8 340.6 L180.2 340.2 L182.6 341.0 L184.9 341.9 L187.3 341.2 L189.7 341.4 L192.1 342.4 L194.5 342.7 L196.8 343.2 L199.2 343.1 L201.6 343.4 L204.1 345.2 L206.6 345.5 L209.1 345.7 L211.5 347.4 L214.0 348.2 L216.5 348.5 L219.1 349.6 L221.8 350.2 L224.4 350.7 L226.7 352.8 L229.0 354.3 L231.3 355.1 L233.8 357.0 L236.3 358.5 L238.8 358.8 L241.3 360.0 L243.7 361.6 L246.1 362.3 L248.4 363.4 L250.8 363.9 L253.2 365.0 L255.3 367.1 L257.4 367.8 L259.5 369.3 L261.6 370.0 L263.7 371.4 L266.0 372.9 L268.4 373.5 L270.7 374.8 L273.0 375.5 L275.3 376.2 L277.6 377.8 L279.9 378.3 L282.3 379.1 L284.6 380.3 L286.9 380.8 L289.3 382.5 L291.7 383.5 L294.0 384.0 L296.4 385.9 L298.8 387.0 L301.2 387.7 L303.4 388.9 L305.6 389.4 L307.8 390.7 L309.9 391.4 L312.1 392.0 L314.3 393.5 L316.5 394.1 L318.7 395.4 L320.9 395.7 L323.1 396.3 L325.3 397.9 L327.5 398.7 L329.7 400.2 L331.9 400.4 L334.1 401.1 L336.3 402.5 L338.5 403.1 L340.7 404.8 L342.9 405.5 L345.2 406.5 L347.4 408.1 L349.6 408.6 L351.9 410.2 L354.1 411.0 L356.3 412.3 L358.7 414.1 L361.1 414.6 L363.5 416.0 L365.9 417.8 L368.3 418.6 L370.5 420.0 L372.7 420.7 L374.9 421.5 L377.1 423.3 L379.3 424.0 L381.5 425.3 L383.7 425.7 L385.9 426.6 L388.1 428.4 L390.3 429.3 L392.5 430.9 L394.7 431.4 L396.9 432.5 L399.1 434.2 L401.3 434.9 L403.5 436.6 L405.7 437.3 L407.9 438.8 L410.0 440.2 L412.0 440.9 L414.1 442.2 L416.2 442.6 L418.2 444.5 L420.3 445.4 L422.4 446.9 L424.4 447.8 L426.5 448.8 L428.7 450.5 L430.9 451.2 L433.1 452.6 L435.3 453.0 L437.5 454.2 L439.7 456.0 L441.9 456.8 L444.1 458.3 L446.3 458.6 L448.5 459.8 L450.7 461.4 L452.9 462.2 L455.1 463.8 L457.3 464.3 L459.5 465.7 L461.7 467.0 L464.0 467.5 L466.2 469.1 L468.4 469.8 L470.6 471.5 L472.8 472.7 L474.9 473.2 L476.9 474.4 L479.0 474.9 L481.1 476.8 L483.1 477.5 L485.2 478.8 L487.2 479.6 L489.3 480.8 L491.4 482.4 L493.4 483.2 L495.5 484.6 L497.6 484.8 L499.6 486.4 L501.7 487.2 L503.7 488.6 L505.8 489.4 L508.0 490.1 L510.2 492.0 L512.4 492.9 L514.6 494.4 L516.8 494.9 L519.0 495.6 L521.3 497.4 L523.5 498.3 L525.7 500.0 L527.9 500.6 L530.1 501.3 L532.3 503.0 L534.5 503.7 L536.7 505.2 L538.9 506.0 L541.1 507.1 L543.3 508.7 L545.5 509.2 L547.7 510.5 L549.9 511.2 L552.1 512.7 L554.3 514.4 L556.5 514.8 L558.7 516.1 L561.0 516.7 L563.2 518.2 L565.5 520.0 L567.7 520.5 L570.0 521.8 L572.2 522.6 L574.5 523.9 L576.7 525.6 L578.9 526.1 L581.1 527.5 L583.3 528.4 L585.5 529.4 L587.7 530.8 L590.0 531.2 L592.2 532.9 L594.4 534.1 L596.6 535.1 L598.8 536.2 L601.0 536.4 L603.2 538.2 L605.4 539.4 L607.6 540.5 L609.8 541.6 L612.0 541.8 L614.2 543.5 L616.5 544.5 L618.7 545.6 L620.9 546.9 L623.1 547.4 L625.3 549.1 L627.5 549.7 L629.7 550.7 L631.9 552.0 L634.1 552.9 L636.3 554.8 L638.5 555.3 L640.8 556.1 L643.0 557.3 L645.2 558.3 L647.4 560.3 L649.6 560.9 L651.8 561.8 L654.0 562.9 L656.2 563.6 L658.4 565.3 L660.6 565.7 L662.8 566.7 L665.0 567.9 L667.2 568.5 L669.4 569.8 L671.6 570.0 L673.8 571.3 L676.0 572.6 L678.2 573.4 L680.4 574.6 L682.6 574.4 L684.8 575.5 L687.0 576.6 L689.2 577.4 L691.4 578.5 L693.6 578.4 L695.9 579.5 L698.1 580.4 L700.3 581.0 L702.5 582.1 L704.7 582.3 L706.9 583.7 L709.3 584.2 L711.7 584.3 L714.1 585.4 L716.5 585.8 L718.9 586.2 L721.3 587.3 L723.7 587.6 L726.1 587.9 L728.5 589.0 L730.9 589.4 L733.3 590.0 L735.6 590.5 L737.9 590.4 L740.2 591.5 L742.5 591.9 L744.8 591.8 L747.0 592.7 L749.3 592.7 L751.6 593.4 L753.9 594.0 L756.2 593.9 L758.5 594.8 L760.9 594.9 L763.4 594.9 L765.8 595.5 L768.3 595.4 L770.7 595.6 L773.2 596.5 L775.6 596.1 L778.1 595.9 L780.5 597.2 L783.0 597.3 L785.4 596.7 L787.8 597.1 L790.2 597.3 L792.6 597.2 L795.0 597.1 L797.4 596.5 L799.8 597.0 L802.2 597.5 L804.6 596.5 L807.0 596.5 L809.5 596.9 L812.0 596.0 L814.4 595.8 L816.9 595.8 L819.4 594.9 L821.9 594.8 L824.3 595.0 L826.8 594.0 L829.3 593.5 L831.5 593.5 L833.8 592.7 L836.0 592.6 L838.3 591.5 L840.5 590.9 L842.7 590.8 L845.0 589.7 L847.2 589.6 L849.5 588.8 L851.7 588.3 L854.0 587.8 L856.4 586.3 L858.7 585.7 L861.0 585.3 L863.3 584.0 L865.6 583.4 L868.0 582.3 L870.3 581.4 L872.5 581.2 L874.6 579.7 L876.8 579.0 L878.9 577.5 L881.1 576.7 L883.2 576.5 L885.4 575.2 L887.5 574.7 L889.7 573.1 L891.9 572.3 L894.0 571.3 L896.2 569.8 L898.3 569.0 L900.5 567.4 L902.7 567.0 L904.8 565.9 L907.0 564.5 L909.1 563.3 L911.3 561.5 L913.5 561.5 L915.8 560.5 L918.0 559.5 L920.2 558.6 L922.5 557.1 L924.7 556.9 L926.9 555.7 L929.1 554.7 L931.4 554.1 L933.6 552.7 L935.8 552.1 L938.1 550.5 L940.3 549.2 L942.5 548.7 L944.8 547.3 L947.0 546.6 L949.2 544.9 L951.4 543.4 L953.7 543.0 L955.9 541.7 L957.9 541.1 L960.0 539.2 L962.0 538.2 L964.0 537.0 L966.1 535.9 L968.1 534.9 L970.2 533.0 L972.2 532.1 L974.2 530.5 L976.3 530.2 L978.3 528.6 L980.2 527.5 L982.2 525.7 L984.1 524.8 L986.1 523.6 L988.0 522.5 L990.0 521.0 L991.9 519.4 L993.9 518.4 L995.9 517.1 L997.8 516.4 L999.8 514.5 L1001.8 513.6 L1003.7 511.7 L1005.7 511.2 L1007.6 509.6 L1009.6 508.8 L1011.6 506.8 L1013.5 505.8 L1015.5 504.3 L1017.5 503.5 L1019.6 502.2 L1021.6 500.6 L1023.6 499.6 L1025.6 498.1 L1027.7 497.7 L1029.7 496.0 L1031.7 495.3 L1033.7 493.5 L1035.8 492.9 L1037.8 491.7 L1039.8 490.7 L1041.9 489.4 L1043.9 487.7 L1045.9 486.9 L1048.0 485.4 L1050.0 484.8 L1052.1 482.7 L1054.1 481.8 L1056.1 480.3 L1058.2 479.7 L1060.2 478.6 L1062.4 477.2 L1064.6 476.4 L1066.8 474.7 L1069.0 474.1 L1071.2 472.6 L1073.4 471.1 L1075.6 470.4 L1077.8 469.1 L1080.0 468.8 L1082.2 467.2 L1084.4 465.8 L1086.6 465.2 L1088.9 464.0 L1091.1 463.8 L1093.3 462.4 L1095.5 461.0 L1097.7 460.3 L1099.9 458.8 L1102.0 458.3 L1104.2 456.6 L1106.4 455.5 L1108.6 454.7 L1110.7 453.1 L1112.9 452.3 L1115.1 450.2 L1117.2 449.4 L1119.4 448.5 L1121.7 447.6 L1124.0 446.8 L1126.3 444.9 L1128.6 444.2 L1131.0 444.0 L1133.3 442.5 L1135.6 441.5 L1137.9 440.2 L1140.2 439.3 L1142.3 438.9 L1144.4 437.0 L1146.4 436.2 L1148.5 434.6 L1150.6 433.8 L1152.7 432.6 L1154.8 430.9 L1156.8 429.9 L1158.9 428.2 L1161.0 427.9 L1163.3 426.6 L1165.6 425.5 L1167.9 424.3 L1170.2 422.7 L1172.6 422.5 L1174.9 421.4 L1177.2 419.7 L1179.5 418.9 L1181.8 417.6 L1183.9 416.9 L1186.0 415.8 L1188.0 414.4 L1190.1 413.9 L1192.2 412.6 L1194.3 412.2 L1196.4 410.3 L1198.4 409.4 L1200.5 408.2 L1202.6 407.3 L1204.9 406.8 L1207.2 405.3 L1209.5 404.6 L1211.8 403.6 L1214.2 402.4 L1216.5 402.0 L1218.8 400.5 L1221.1 399.6 L1223.4 399.1 L1225.7 397.7 L1228.0 397.2 L1230.3 396.3 L1232.6 395.2 L1234.9 394.9 L1237.2 393.4 L1239.5 392.7 L1241.8 392.3 L1244.1 390.9 L1246.4 390.6 L1248.7 389.7 L1251.0 388.9 L1253.3 389.0 L1255.7 387.9 L1258.0 387.1 L1260.3 386.7 L1262.6 385.8 L1264.9 385.8 L1267.4 384.8 L1269.9 383.7 L1272.3 383.7 L1274.8 383.0 L1277.3 382.1 L1279.8 381.8 L1282.3 380.8 L1284.7 379.8 L1287.2 379.8 L1289.7 378.7 L1292.1 377.2 L1294.6 377.3 L1297.4 377.0 L1300.2 375.9 L1303.1 375.1 L1305.9 375.0" fill="none" stroke="#f010e8" stroke-width="3.3" stroke-linejoin="round" /><g shape-rendering="crispEdges"><path d="M216.5 160V688" stroke="#a8222c" stroke-width="1"/><path d="M301.5 160V688" stroke="#30e040" stroke-width="1"/><path d="M1279.5 160V688" stroke="#106810" stroke-width="1"/><path d="M656 706.5H688M160 706.5H167" stroke="#2828a8" stroke-width="1"/></g></svg><span class="t" style="left:113.84px;top:141.92px;font-size:12.5px;line-height:12.5px;color:#1a1a9a;transform:scaleX(0.8595);">R.L</span><span class="t" style="left:132.30px;top:141.92px;font-size:12.5px;line-height:12.5px;color:#a8222c;transform:scaleX(0.8615);">SWR</span><span class="t" style="left:116.70px;top:157.82px;font-size:12.5px;line-height:12.5px;color:#1a1a9a;transform:scaleX(0.7898);">0dB</span><span class="t" style="left:142.70px;top:157.82px;font-size:12.5px;line-height:12.5px;color:#a8222c;transform:scaleX(0.8099);">10</span><span class="t" style="left:116.70px;top:207.32px;font-size:12.5px;line-height:12.5px;color:#1a1a9a;transform:scaleX(0.7571);">3</span><span class="t" style="left:116.70px;top:260.32px;font-size:12.5px;line-height:12.5px;color:#1a1a9a;transform:scaleX(0.7571);">6</span><span class="t" style="left:116.70px;top:330.32px;font-size:12.5px;line-height:12.5px;color:#1a1a9a;transform:scaleX(0.8099);">10</span><span class="t" style="left:116.70px;top:506.32px;font-size:12.5px;line-height:12.5px;color:#1a1a9a;transform:scaleX(0.8099);">20</span><span class="t" style="left:116.70px;top:677.82px;font-size:12.5px;line-height:12.5px;color:#1a1a9a;transform:scaleX(0.8099);">30</span><span class="t" style="left:148.70px;top:314.32px;font-size:12.5px;line-height:12.5px;color:#a8222c;transform:scaleX(0.7571);">5</span><span class="t" style="left:148.70px;top:431.32px;font-size:12.5px;line-height:12.5px;color:#a8222c;transform:scaleX(0.7571);">3</span><span class="t" style="left:149.20px;top:524.32px;font-size:12.5px;line-height:12.5px;color:#a8222c;transform:scaleX(0.7000);">2</span><span class="t" style="left:140.00px;top:590.32px;font-size:12.5px;line-height:12.5px;color:#a8222c;transform:scaleX(0.8035);">1.5</span><span class="t" style="left:149.30px;top:677.82px;font-size:12.5px;line-height:12.5px;color:#a8222c;transform:scaleX(0.7000);">1</span><span class="t" style="left:1307.80px;top:158.02px;font-size:12.5px;line-height:12.5px;color:#c030c0;transform:scaleX(0.7967);">180°</span><span class="t" style="left:1332.00px;top:158.02px;font-size:12.5px;line-height:12.5px;color:#6c6c6c;transform:scaleX(0.8228);">500</span><span class="t" style="left:1308.70px;top:287.32px;font-size:12.5px;line-height:12.5px;color:#c030c0;transform:scaleX(0.8238);">135°</span><span class="t" style="left:1332.00px;top:287.32px;font-size:12.5px;line-height:12.5px;color:#6c6c6c;transform:scaleX(0.8132);">375</span><span class="t" style="left:1308.70px;top:419.32px;font-size:12.5px;line-height:12.5px;color:#c030c0;transform:scaleX(0.8252);">90°</span><span class="t" style="left:1332.00px;top:419.32px;font-size:12.5px;line-height:12.5px;color:#6c6c6c;transform:scaleX(0.8132);">250</span><span class="t" style="left:1308.70px;top:551.12px;font-size:12.5px;line-height:12.5px;color:#c030c0;transform:scaleX(0.8252);">45°</span><span class="t" style="left:1332.00px;top:551.12px;font-size:12.5px;line-height:12.5px;color:#6c6c6c;transform:scaleX(0.8132);">125</span><span class="t" style="left:1308.70px;top:677.82px;font-size:12.5px;line-height:12.5px;color:#c030c0;transform:scaleX(0.7781);">0°</span><span class="t" style="left:1332.00px;top:677.82px;font-size:12.5px;line-height:12.5px;color:#6c6c6c;transform:scaleX(0.7143);">0</span><span class="t" style="left:1332.00px;top:630.32px;font-size:12.5px;line-height:12.5px;color:#6c6c6c;transform:scaleX(0.7884);">50</span><span class="t" style="left:1305.86px;top:142.12px;font-size:12.5px;line-height:12.5px;color:#c030c0;transform:scaleX(0.8387);">Ph.</span><span class="t" style="left:1329.60px;top:142.12px;font-size:12.5px;line-height:12.5px;color:#6c6c6c;transform:scaleX(0.9225);">XRZ</span><span class="t" style="left:955.63px;top:142.12px;font-size:12.5px;line-height:12.5px;color:#000;transform:scaleX(0.8719);">Legenda :</span><span class="t" style="left:1031.70px;top:142.12px;font-size:12.5px;line-height:12.5px;color:#a8222c;transform:scaleX(0.8512);">SWR</span><span class="t" style="left:1061.18px;top:142.12px;font-size:12.5px;line-height:12.5px;color:#1a6a1a;transform:scaleX(0.8170);">| Z |</span><span class="t" style="left:1085.72px;top:142.12px;font-size:12.5px;line-height:12.5px;color:#1a1a9a;transform:scaleX(0.8810);">R.L.</span><span class="t" style="left:1110.84px;top:142.12px;font-size:12.5px;line-height:12.5px;color:#c030c0;transform:scaleX(0.8611);">Phase</span><span class="t" style="left:1145.29px;top:142.12px;font-size:12.5px;line-height:12.5px;color:#6c6c6c;transform:scaleX(0.9125);">Rs</span><span class="t" style="left:1165.47px;top:142.12px;font-size:12.5px;line-height:12.5px;color:#1a7878;transform:scaleX(0.8327);">| Xs |</span><span class="t" style="left:1196.50px;top:142.12px;font-size:12.5px;line-height:12.5px;color:#6c6c6c;transform:scaleX(0.8315);">(X,R,Z = Ohms.)</span><span class="t" style="left:218.95px;top:162.32px;font-size:12.5px;line-height:12.5px;color:#a8222c;transform:scaleX(0.7494);">M1</span><span class="t" style="left:304.70px;top:162.32px;font-size:12.5px;line-height:12.5px;color:#38d850;transform:scaleX(0.8512);">SWR</span><span class="t" style="left:303.82px;top:175.32px;font-size:12.5px;line-height:12.5px;color:#38d850;transform:scaleX(0.8845);">Mini</span><span class="t" style="left:1261.70px;top:162.02px;font-size:12.5px;line-height:12.5px;color:#1a6a1a;transform:scaleX(0.9017);">M2</span><span class="t" style="left:132.75px;top:692.02px;font-size:12.5px;line-height:12.5px;color:#000;transform:scaleX(0.8509);">1,000Mhz</span><span class="t" style="left:236.60px;top:692.02px;font-size:12.5px;line-height:12.5px;color:#000;transform:scaleX(0.8564);">5,590Mhz</span><span class="t" style="left:342.00px;top:692.02px;font-size:12.5px;line-height:12.5px;color:#000;transform:scaleX(0.8442);">10,282Mhz</span><span class="t" style="left:445.70px;top:692.02px;font-size:12.5px;line-height:12.5px;color:#000;transform:scaleX(0.8539);">14,974Mhz</span><span class="t" style="left:550.40px;top:692.02px;font-size:12.5px;line-height:12.5px;color:#000;transform:scaleX(0.8474);">19,564Mhz</span><span class="t" style="left:654.80px;top:692.02px;font-size:12.5px;line-height:12.5px;color:#000;transform:scaleX(0.8507);">24,256Mhz</span><span class="t" style="left:758.80px;top:692.02px;font-size:12.5px;line-height:12.5px;color:#000;transform:scaleX(0.8507);">28,846Mhz</span><span class="t" style="left:862.80px;top:692.02px;font-size:12.5px;line-height:12.5px;color:#000;transform:scaleX(0.8507);">33,538Mhz</span><span class="t" style="left:966.80px;top:692.02px;font-size:12.5px;line-height:12.5px;color:#000;transform:scaleX(0.8507);">38,128Mhz</span><span class="t" style="left:1071.30px;top:692.02px;font-size:12.5px;line-height:12.5px;color:#000;transform:scaleX(0.8507);">42,820Mhz</span><span class="t" style="left:1176.90px;top:692.02px;font-size:12.5px;line-height:12.5px;color:#000;transform:scaleX(0.8474);">47,512Mhz</span><span class="t" style="left:1276.45px;top:692.02px;font-size:12.5px;line-height:12.5px;color:#000;transform:scaleX(0.8523);">52,000Mhz</span><div class="abs sunk1" style="left:0px;top:724px;width:108px;height:17px;"></div><div class="abs sunk1" style="left:110px;top:724px;width:113px;height:17px;"></div><div class="abs sunk1" style="left:225px;top:724px;width:72px;height:17px;"></div><div class="abs sunk1" style="left:300px;top:724px;width:88px;height:17px;"></div><div class="abs sunk1" style="left:390px;top:724px;width:87px;height:17px;"></div><div class="abs sunk1" style="left:480px;top:724px;width:102px;height:17px;"></div><div class="abs sunk1" style="left:585px;top:724px;width:97px;height:17px;"></div><div class="abs sunk1" style="left:684px;top:724px;width:681px;height:17px;"></div><span class="t" style="left:120.70px;top:726.77px;font-size:11.5px;line-height:11.5px;color:#000;font-weight:bold;letter-spacing:0.521px;">9,670000 Mhz</span><span class="t" style="left:231.80px;top:726.77px;font-size:11.5px;line-height:11.5px;color:#000;font-weight:bold;letter-spacing:0.356px;">Swr : 1,05</span><span class="t" style="left:306.90px;top:726.77px;font-size:11.5px;line-height:11.5px;color:#000;font-weight:bold;letter-spacing:0.554px;">| Z | : 49,82</span><span class="t" style="left:396.60px;top:726.77px;font-size:11.5px;line-height:11.5px;color:#000;font-weight:bold;letter-spacing:0.462px;">R.L. : 32,51</span><span class="t" style="left:486.70px;top:726.77px;font-size:11.5px;line-height:11.5px;color:#000;font-weight:bold;letter-spacing:0.501px;">Phase : 94,49</span><span class="t" style="left:591.50px;top:726.77px;font-size:11.5px;line-height:11.5px;color:#000;font-weight:bold;letter-spacing:0.600px;">Rs : 49,76</span><span class="t" style="left:691.50px;top:726.77px;font-size:11.5px;line-height:11.5px;color:#000;font-weight:bold;letter-spacing:0.469px;">| XS | : 2,35</span>
</div>
</body></html>
